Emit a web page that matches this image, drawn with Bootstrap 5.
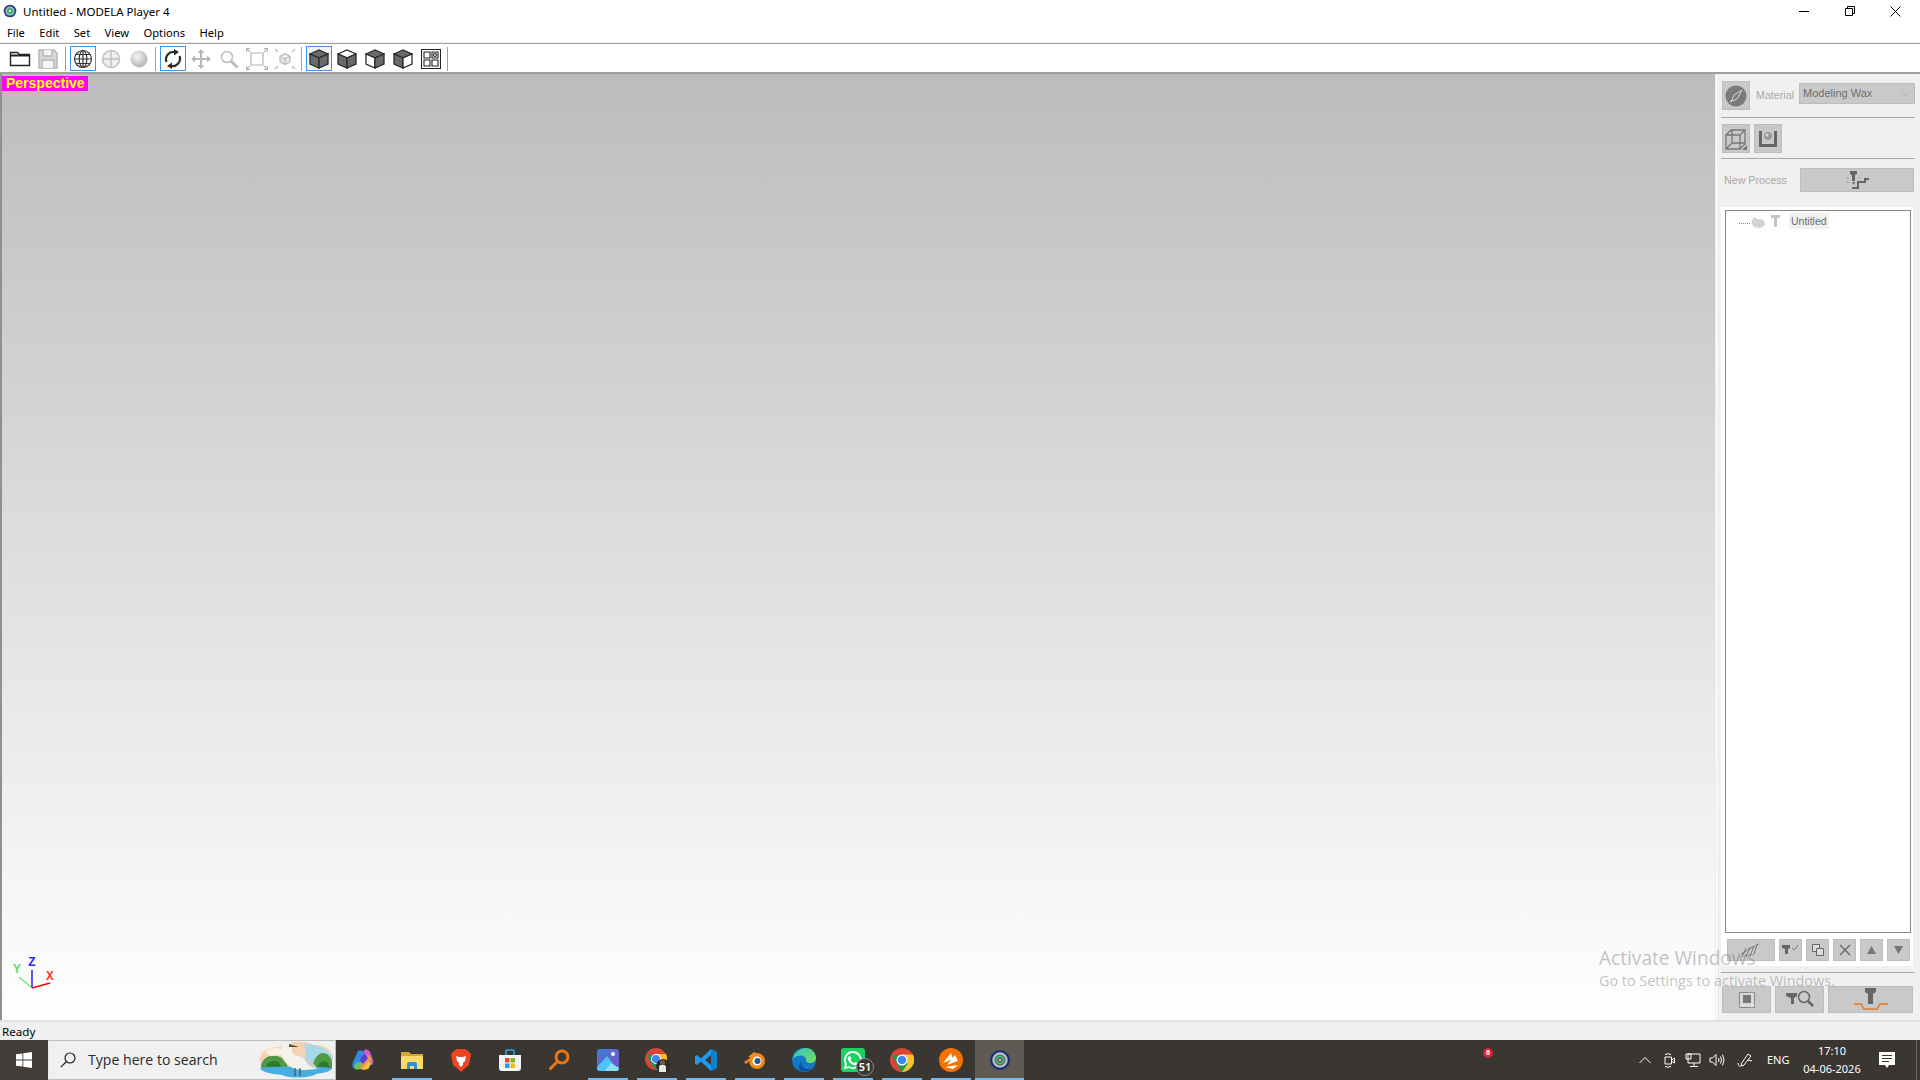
<!DOCTYPE html>
<html lang="en">
<head>
<meta charset="UTF-8">
<title>Untitled - MODELA Player 4</title>
<link rel="stylesheet" href="https://cdn.jsdelivr.net/npm/bootstrap@5.3.0/dist/css/bootstrap.min.css">
<style>
    html, body { height: 1080px; overflow: hidden; }
    body { font-family: "Noto Sans", "Open Sans", sans-serif; font-size: 12px; color: #000; background: #f0f0f0; }
    svg { display: block; flex: none; }

    .win-title { height: 22px; background: #fff; padding-left: 3px; }
    .win-title span { margin-left: 6px; font-size: 11.5px; line-height: 23px; }
    .win-ctl { width: 45.5px; height: 20px; }
    .win-menu { height: 20px; background: #fff; padding-left: 7px; gap: 14.4px; font-size: 11.2px; line-height: 21px; }
    .win-rule { height: 2px; background: #f0f0f0; border-bottom: 1px solid #a0a0a0; }

    .tool-bar { height: 30px; background: #fff; padding: 2px 0 0 6px; border-bottom: 2px solid #a0a0a0; }
    .tool-btn { width: 28px; height: 25px; }
    .tool-on { display: flex; justify-content: center; }
    .tool-on > div { width: 26px; height: 25px; border: 1px solid #3a96ea; display: flex; align-items: center; justify-content: center; }
    .tool-on.dither > div { background: repeating-conic-gradient(#e8e8e8 0 25%, #fff 0 50%) 0 0 / 2px 2px; }
    .tool-sep { width: 6px; height: 25px; position: relative; }
    .tool-sep::after { content: ""; position: absolute; left: 2px; top: 1px; bottom: 0; width: 1px; background: #a0a0a0; }

    .work-area { height: 946px; }
    .view-port { position: relative; width: 1716px; background: linear-gradient(#bcbcbc, #fff); border-left: 2px solid #909090; border-right: 1px solid #ececec; }
    .view-tag { position: absolute; left: 0; top: 2px; width: 86px; height: 15px; background: #ff00ff; color: #ffff00; font: bold 14px/15px "Liberation Sans", sans-serif; padding-left: 4px; }
    .view-axis { position: absolute; left: 0; bottom: 0; }

    .side-panel { width: 204px; padding: 7px 5px 0 5px; font: 11px "Liberation Sans", sans-serif; color: #a8a8a8; border-left: 1px solid #fff; }
    .gray-btn { background: #c9c9c9; border: 1px solid #bdbdbd; display: flex; align-items: center; justify-content: center; }
    .side-rule { height: 1px; background: #a8a8a8; margin-left: -1px; }
    .side-label { font-size: 10.7px; }
    .mat-select { width: 116px; height: 21px; margin-top: 2px; background: #c9c9c9; border: 1px solid #bdbdbd; color: #6d6d6d; padding: 0 3px; line-height: 18px; }
    .tree-frame { background: #fff; padding: 3px 2px 5px 3px; width: 192px; margin: 15px 0 0 -1px; }
    .tree-box { height: 723px; border: 1px solid #8a8a8a; margin-left: 1px; background: #fff; padding: 2px 0 0 10px; }
    .tree-label { background: #f0f0f0; color: #6d6d6d; padding: 0 2px; font-size: 10.5px; line-height: 16px; margin-left: 9px; }

    .status-line { height: 20px; border-top: 2px solid #e2e2e2; font-size: 11.6px; line-height: 20px; padding-left: 2px; background: #f0f0f0; }

    .task-bar { height: 40px; background: #3a3632; color: #fff; }
    .task-start { width: 48px; background: #403d3a; }
    .task-search { width: 288px; background: #f0f0f0; border: 1px solid #bcbcbc; border-left-color: #e8e8e8; color: #2a2a2a; padding-left: 11px; }
    .task-search span { margin-left: 12px; font-family: "Open Sans", sans-serif; font-size: 14.1px; }
    .task-item { width: 49px; height: 40px; position: relative; }
    .task-item.open::after { content: ""; position: absolute; left: 4.5px; right: 4.5px; bottom: 0; height: 2px; background: #76b9ed; }
    .task-item.cur { background: #5f5a54; }
    .task-item.cur::after { left: 0; right: 0; }
    .task-count { position: absolute; right: 3px; bottom: 4px; width: 18px; height: 18px; border-radius: 50%; background: #3a3632; border: 1px solid #8a8a8a; font-size: 11px; line-height: 16px; text-align: center; font-weight: 600; }
    .task-dot { width: 10px; height: 10px; border-radius: 50%; background: #d9232e; margin: 8px 0 0 459px; color: #fff; font-size: 7px; font-weight: 700; line-height: 10px; text-align: center; }
    .tray-text { font-size: 11px; line-height: 18px; text-align: center; white-space: nowrap; }

    .win-water { position: absolute; left: 1599px; top: 944px; color: rgba(110,110,110,.42); font-family: "Open Sans", sans-serif; pointer-events: none; white-space: nowrap; }
    .win-water div:first-child { font-size: 19.1px; line-height: 28px; }
    .win-water div:last-child { font-size: 14.4px; line-height: 18px; }
</style>
</head>
<body class="d-flex flex-column">

<!-- title bar -->
<div class="win-title d-flex align-items-center">
    <svg width="14" height="14" viewBox="0 0 14 14"><circle cx="7" cy="7" r="6.3" fill="#24417e"/><circle cx="7" cy="7" r="4.6" fill="#9fb7c8"/><circle cx="7" cy="7" r="3" fill="#3fae6c"/><circle cx="7" cy="7" r="1.2" fill="#d8f0dc"/></svg>
    <span>Untitled - MODELA Player 4</span>
    <div class="d-flex ms-auto" style="margin-right:2px">
        <div class="win-ctl d-flex align-items-center justify-content-center"><svg width="10" height="10" viewBox="0 0 10 10"><path d="M0 5.500h10" stroke="#000"/></svg></div>
        <div class="win-ctl d-flex align-items-center justify-content-center"><svg width="10" height="10" viewBox="0 0 10 10" fill="none" stroke="#000"><path d="M.5 2.500h7v7h-7zM2.500 2.500v-2h7v7h-2"/></svg></div>
        <div class="win-ctl d-flex align-items-center justify-content-center"><svg width="11" height="11" viewBox="0 0 11 11"><path d="M.5.500l10 10M10.500 .5l-10 10" stroke="#000"/></svg></div>
    </div>
</div>
<div class="win-menu d-flex"><span>File</span><span>Edit</span><span>Set</span><span>View</span><span>Options</span><span>Help</span></div>
<div class="win-rule"></div>

<!-- toolbar -->
<div class="tool-bar d-flex">
    <div class="tool-btn d-flex align-items-center justify-content-center"><svg width="22" height="18" viewBox="0 0 22 18" fill="none" stroke="#222" stroke-width="1.400"><path d="M1.500 15.500v-13h7l2 2h10v11z" fill="#fff"/><path d="M1.500 5.500h19" stroke-width="2"/></svg></div>
    <div class="tool-btn d-flex align-items-center justify-content-center"><svg width="20" height="20" viewBox="0 0 20 20" fill="#d8d8d8" stroke="#b5b5b5" stroke-width="1.400"><path d="M1 1h15l3 3v15H1z"/><path d="M5 1v6h9V1M4 19v-8h12v8" fill="#f4f4f4"/></svg></div>
    <div class="tool-sep" style="margin-left:1px"></div>
    <div class="tool-btn tool-on"><div><svg width="20" height="20" viewBox="0 0 20 20" fill="none" stroke="#333" stroke-width="1.200"><circle cx="10" cy="10" r="8.500"/><ellipse cx="10" cy="10" rx="3.800" ry="8.500"/><path d="M10 1.500v17M1.500 10h17M3 5.500h14M3 14.500h14"/></svg></div></div>
    <div class="tool-btn d-flex align-items-center justify-content-center"><svg width="20" height="20" viewBox="0 0 20 20" fill="#eee" stroke="#c2c2c2" stroke-width="1.500"><circle cx="10" cy="10" r="8.500"/><path d="M10 1.500v17M1.500 10h17" fill="none"/></svg></div>
    <div class="tool-btn d-flex align-items-center justify-content-center"><svg width="20" height="20" viewBox="0 0 20 20"><defs><radialGradient id="ballShade" cx=".4" cy=".35" r=".7"><stop offset="0" stop-color="#f5f5f5"/><stop offset="1" stop-color="#b0b0b0"/></radialGradient></defs><circle cx="10" cy="10" r="8.500" fill="url(#ballShade)"/></svg></div>
    <div class="tool-sep"></div>
    <div class="tool-btn tool-on"><div><svg width="20" height="20" viewBox="0 0 20 20" fill="none" stroke="#2a2a2a" stroke-width="2.200"><path d="M3.500 13A7.500 7.500 0 0 1 12 3"/><path d="M16.500 7A7.500 7.500 0 0 1 8 17"/><path d="M11 0l5 3-5 3.500zM9 20l-5-3 5-3.500z" fill="#2a2a2a" stroke="none"/></svg></div></div>
    <div class="tool-btn d-flex align-items-center justify-content-center"><svg width="20" height="20" viewBox="0 0 20 20" fill="#b8b8b8"><path d="M10 0l3.500 4h-2.500v5h5V6.500l4 3.500-4 3.500V11h-5v5h2.500L10 20l-3.500-4H9v-5H4v2.500L0 10l4-3.500V9h5V4H6.500z"/></svg></div>
    <div class="tool-btn d-flex align-items-center justify-content-center"><svg width="20" height="20" viewBox="0 0 20 20" fill="none" stroke="#bdbdbd"><circle cx="8" cy="8" r="5.500" stroke-width="1.500"/><path d="M12 12l6.500 6.500" stroke-width="3"/></svg></div>
    <div class="tool-btn d-flex align-items-center justify-content-center"><svg width="22" height="22" viewBox="0 0 22 22" fill="none" stroke="#b5b5b5" stroke-width="1.200"><path d="M5 5h12v12H5z"/><path d="M1 1l3 3M21 1l-3 3M1 21l3-3M21 21l-3-3"/><path d="M.5 4V.5H4M18 .5h3.500V4M.5 18v3.500H4M18 21.500h3.500V18"/></svg></div>
    <div class="tool-btn d-flex align-items-center justify-content-center"><svg width="22" height="22" viewBox="0 0 22 22" fill="none" stroke="#bcbcbc" stroke-width="1.200"><path d="M6 8l5-2.500L16 8v6l-5 2.500L6 14zM6 8l5 2.500L16 8M11 10.500v6" fill="#e4e4e4"/><path d="M1 1l3 3M21 1l-3 3M1 21l3-3M21 21l-3-3"/></svg></div>
    <div class="tool-sep"></div>
    <div class="tool-btn tool-on dither"><div><svg width="20" height="20" viewBox="0 0 20 20" stroke="#2a2a2a" stroke-width="1.300"><path d="M1 5l9-4 9 4-9 4z" fill="#6a6a6a"/><path d="M1 5v10l9 4V9z" fill="#6a6a6a"/><path d="M19 5v10l-9 4V9z" fill="#6a6a6a"/></svg></div></div>
    <div class="tool-btn d-flex align-items-center justify-content-center"><svg width="20" height="20" viewBox="0 0 20 20" stroke="#2a2a2a" stroke-width="1.300"><path d="M1 5l9-4 9 4-9 4z" fill="#fff"/><path d="M1 5v10l9 4V9z" fill="#6a6a6a"/><path d="M19 5v10l-9 4V9z" fill="#6a6a6a"/></svg></div>
    <div class="tool-btn d-flex align-items-center justify-content-center"><svg width="20" height="20" viewBox="0 0 20 20" stroke="#2a2a2a" stroke-width="1.300"><path d="M1 5l9-4 9 4-9 4z" fill="#6a6a6a"/><path d="M1 5v10l9 4V9z" fill="#fff"/><path d="M19 5v10l-9 4V9z" fill="#6a6a6a"/></svg></div>
    <div class="tool-btn d-flex align-items-center justify-content-center"><svg width="20" height="20" viewBox="0 0 20 20" stroke="#2a2a2a" stroke-width="1.300"><path d="M1 5l9-4 9 4-9 4z" fill="#6a6a6a"/><path d="M1 5v10l9 4V9z" fill="#6a6a6a"/><path d="M19 5v10l-9 4V9z" fill="#fff"/></svg></div>
    <div class="tool-btn d-flex align-items-center justify-content-center"><svg width="20" height="20" viewBox="0 0 20 20" fill="none" stroke="#222" stroke-width="1.100"><path d="M.5.500h19v19H.5z"/><path d="M3 3h6v6H3zM11 3h6v6h-6zM3 11h6v6H3zM11 11h6v6h-6z"/><circle cx="14" cy="6" r="1.500"/></svg></div>
    <div class="tool-sep"></div>
</div>

<!-- main area -->
<div class="work-area d-flex">
    <div class="view-port">
        <div class="view-tag">Perspective</div>
        <svg class="view-axis" width="70" height="70" viewBox="0 0 70 70" font-family="Liberation Mono, monospace" font-size="13" font-weight="bold">
            <path d="M30 20v18" stroke="#0000ff" stroke-width="1.300"/>
            <path d="M30 38l18-5" stroke="#ff0000" stroke-width="1.300"/>
            <path d="M30 38L17 27" stroke="#00ee00" stroke-width="1"/>
            <text x="26" y="16" fill="#2a2aff">Z</text>
            <text x="44" y="30" fill="#ff3a3a">X</text>
            <text x="11" y="23" fill="#66dd66">Y</text>
        </svg>
    </div>
    <div class="side-panel d-flex flex-column">
        <div class="d-flex align-items-start">
            <div class="gray-btn" style="width:28px;height:29px"><svg width="22" height="22" viewBox="0 0 22 22"><circle cx="11" cy="11" r="10.500" fill="#7a7a7a"/><path d="M17 5L9 10l-2 5-2 2 2-1 5-2z" fill="none" stroke="#d8d8d8"/></svg></div>
            <span class="side-label" style="margin:8px 0 0 6px">Material</span>
            <div class="mat-select d-flex justify-content-between ms-auto"><span>Modeling Wax</span><svg width="10" height="19" viewBox="0 0 10 19"><path d="M1 8l4 4 4-4" fill="none" stroke="#b0b0b0"/></svg></div>
        </div>
        <div class="side-rule" style="margin-top:7px"></div>
        <div class="d-flex gap-1" style="margin-top:6px">
            <div class="gray-btn" style="width:28px;height:29px"><svg width="22" height="22" viewBox="0 0 22 22" fill="none" stroke="#777" stroke-width="1.300"><path d="M1 7h14v14H1zM1 7l5-5h14v14l-5 5M15 7l5-5M1 21l6-6M7 2v13h13"/><path d="M22 22h-5l5-5z" fill="#777" stroke="none"/></svg></div>
            <div class="gray-btn" style="width:28px;height:29px"><svg width="20" height="20" viewBox="0 0 20 20"><path d="M1 2v16h18V2h-3v13H4V2z" fill="#666"/><circle cx="10" cy="7" r="4" fill="#999"/><circle cx="9" cy="6" r="1.500" fill="#ddd"/></svg></div>
        </div>
        <div class="side-rule" style="margin-top:5px"></div>
        <div class="d-flex align-items-center" style="margin-top:9px">
            <span class="side-label" style="margin-left:2px">New Process</span>
            <div class="gray-btn ms-auto" style="width:114px;height:24px;margin-right:1px"><svg width="24" height="20" viewBox="0 0 24 20" fill="#666"><path d="M5 1h7v3l-2 1v6H7V5L5 4zM7 12h3l-1 3z"/><path d="M7 18h6v-6h7V9h4" fill="none" stroke="#666" stroke-width="2"/><path d="M2 8h2M1 12h3M13 8h2" stroke="#999"/></svg></div>
        </div>
        <div class="tree-frame d-flex flex-column">
            <div class="tree-box">
                <div class="d-flex align-items-center">
                    <svg width="32" height="16" viewBox="0 0 32 16"><path d="M3 10.500h12" stroke="#888" stroke-dasharray="1 1"/><path d="M14 5l3 2h3c4 0 5 3 5 5s-3 4-6 4-6-1-7-4 1-5 2-7z" transform="translate(4 -1)" fill="#d4d4d4"/></svg>
                    <svg width="9" height="12" viewBox="0 0 9 12" style="margin-left:3px" fill="#c4c4c4"><path d="M0 0h9v3H6v9H3V3H0z"/></svg>
                    <span class="tree-label">Untitled</span>
                </div>
            </div>
            <div class="d-flex align-items-center" style="margin-top:6px;margin-left:3px;gap:4px">
                <div class="gray-btn" style="width:48px;height:22px"><svg width="22" height="16" viewBox="0 0 22 16" fill="none" stroke="#777"><path d="M2 15l4-9M6 15l4-10M10 14l4-10M14 12l3-9M1 12c4-1 5-4 7-4s3-3 5-3 3-3 6-3"/></svg></div>
                <div class="gray-btn" style="width:23px;height:22px"><svg width="17" height="14" viewBox="0 0 17 14"><path d="M0 2h8v3L6 6v5H3V6L0 5z" fill="#666"/><path d="M10 5l2 2 4-5" fill="none" stroke="#777"/></svg></div>
                <div class="gray-btn" style="width:23px;height:22px"><svg width="12" height="12" viewBox="0 0 12 12" fill="#ddd" stroke="#666"><path d="M.5.500h7v7h-7z"/><path d="M4.500 4.500h7v7h-7z"/></svg></div>
                <div class="gray-btn" style="width:23px;height:22px"><svg width="12" height="12" viewBox="0 0 12 12"><path d="M1 1l10 10M11 1L1 11" stroke="#666" stroke-width="1.400"/></svg></div>
                <div class="gray-btn" style="width:23px;height:22px"><svg width="9" height="8" viewBox="0 0 9 8"><path d="M4.500 0L9 8H0z" fill="#777"/></svg></div>
                <div class="gray-btn" style="width:23px;height:22px"><svg width="9" height="8" viewBox="0 0 9 8"><path d="M0 0h9L4.500 8z" fill="#777"/></svg></div>
            </div>
        </div>
        <div class="side-rule" style="margin-top:6px"></div>
        <div class="d-flex" style="margin-top:13px;gap:4px">
            <div class="gray-btn" style="width:49px;height:27px"><svg width="16" height="16" viewBox="0 0 16 16"><path d="M.5.500h15v15H.5z" fill="#d8d8d8" stroke="#888"/><path d="M4 3h8v8H4z" fill="#777"/><path d="M13 .5v15M.5 13h15" stroke="#eee" stroke-dasharray="1 1"/></svg></div>
            <div class="gray-btn" style="width:49px;height:27px"><svg width="30" height="20" viewBox="0 0 30 20" fill="#666"><path d="M1 3h11v3L9 8v6H6V8L1 6z"/><circle cx="19" cy="7" r="5.500" fill="none" stroke="#666" stroke-width="1.500"/><path d="M23 11l5 5" stroke="#666" stroke-width="2.500"/></svg></div>
            <div class="gray-btn" style="width:85px;height:27px"><svg width="36" height="24" viewBox="0 0 36 24"><path d="M12 0h11v4l-3 2v10h-5V6l-3-2z" fill="#666"/><path d="M1 16h7l3 5h13l3-5h8" fill="none" stroke="#e08a45" stroke-width="2"/></svg></div>
        </div>
    </div>
</div>

<div class="status-line">Ready</div>

<!-- taskbar -->
<div class="task-bar d-flex">
    <div class="task-start d-flex align-items-center justify-content-center"><svg width="16" height="16" viewBox="0 0 16 16" fill="#fff"><path d="M0 2.300l6.500-.9v6.200H0zM7.300 1.300L16 0v7.600H7.300zM0 8.400h6.500v6.200L0 13.700zM7.300 8.400H16V16l-8.700-1.300z"/></svg></div>
    <div class="task-search d-flex align-items-center">
        <svg width="16" height="16" viewBox="0 0 16 16" fill="none" stroke="#222" stroke-width="1.200"><circle cx="10" cy="6" r="5"/><path d="M6.500 9.500L.8 15.200"/></svg>
        <span>Type here to search</span>
        <svg class="ms-auto" width="76" height="38" viewBox="0 0 76 38" style="margin-right:1px">
            <path d="M2 20C0 10 12 6 22 6 30 0 48-1 56 4c8-1 18 4 19 12 0 6-2 12-6 14H8c-4-2-5-6-6-10z" fill="#f4d2b4"/>
            <path d="M46 3c8 0 24 3 29 13l-3 12H50z" fill="#a9d9e8"/>
            <ellipse cx="17" cy="11" rx="9" ry="4" fill="#fbeee2"/>
            <path d="M3 26c0-6 5-11 10-11s5-1 9 1 7 6 8 10v3H5zM54 28c1-8 5-16 11-16 5 0 9 5 9 10v6z" fill="#4f9a42"/>
            <path d="M8 24c3-4 9-5 13-3l3 7H10zM60 24c2-4 7-5 10-2l2 6H60z" fill="#2f7a32"/>
            <path d="M2 27c14-2 56-2 72 0-1 4-10 5-16 6-4 4-26 5-34 1-8-1-20-2-22-7z" fill="#47aee0"/>
            <path d="M26 3c3-3 8-1 8 3 0 4 0 6 3 8 9 3 15 6 22 14-9 1-20 2-26-2-7-4-10-11-10-16 0-3 1-6 3-7z" fill="#f4f2ec"/>
            <path d="M45 15c5 2 10 6 14 12-6 0-10-3-14-12z" fill="#c5ced2"/>
            <path d="M31 3l10 3-10 0z" fill="#55483e"/>
            <path d="M37 27v8M42 27v8" stroke="#4c4c4c" stroke-width="1.200"/>
        </svg>
    </div>
    <div style="width:2px"></div>
    <div class="task-item d-flex align-items-center justify-content-center"><svg width="22" height="22" viewBox="0 0 22 22"><path d="M6 2c3-2 6 0 6 3l-3 12c-1 3-4 4-6 3-3-1-3-4-2-7z" fill="#2f8be8"/><path d="M12 1c3-1 5 0 6 2l3 8c1 3-1 6-3 5l-7-2z" fill="#c85fd0"/><path d="M8 14l7-8c3 0 5 3 4 6l-3 6c-2 3-6 3-8 2z" fill="#f0934a"/><path d="M4 14c2-1 5-1 6 1l-2 5c-2 1-5 1-6-2z" fill="#6ac254"/><path d="M9 8l4-3 3 4-5 6-3-3z" fill="#5a3fd0"/><path d="M16 13l3 1-2 5c-2 2-5 2-7 1z" fill="#f2c53d"/></svg></div>
    <div class="task-item open d-flex align-items-center justify-content-center"><svg width="22" height="20" viewBox="0 0 22 20"><path d="M0 2h8l2 2h12v15H0z" fill="#d9a52e"/><path d="M0 6h22v13H0z" fill="#fadb6a"/><path d="M6 19v-5q0-2 2-2h6q2 0 2 2v5h-3v-3H9v3z" fill="#2f8fd8"/></svg></div>
    <div class="task-item d-flex align-items-center justify-content-center"><svg width="20" height="23" viewBox="0 0 20 23"><path d="M3 2l3-2h8l3 2 3 3-2 11-6 5-2 2-2-2-6-5L0 5z" fill="#f0441f"/><path d="M5 7l3 1h4l3-1-1 5-2 2v2l-2 2-2-2v-2l-2-2z" fill="#fff"/></svg></div>
    <div class="task-item d-flex align-items-center justify-content-center"><svg width="22" height="22" viewBox="0 0 22 22"><path d="M0 6h22v13q0 3-3 3H3q-3 0-3-3z" fill="#f4f4f4"/><path d="M7 6V2q0-1 1-1h6q1 0 1 1v4" fill="none" stroke="#2aa6df" stroke-width="1.600"/><path d="M6 9h4.500v4.500H6z" fill="#ea4b2c"/><path d="M11.500 9H16v4.500h-4.500z" fill="#7cb82f"/><path d="M6 14.500h4.500V19H6z" fill="#2a9fe0"/><path d="M11.500 14.500H16V19h-4.500z" fill="#f5b81f"/></svg></div>
    <div class="task-item d-flex align-items-center justify-content-center"><svg width="22" height="22" viewBox="0 0 22 22" fill="none" stroke="#f07410" stroke-width="3"><circle cx="14" cy="8" r="6"/><path d="M9.500 12.500L2.500 19.500" stroke-linecap="round"/></svg></div>
    <div class="task-item open d-flex align-items-center justify-content-center"><svg width="22" height="22" viewBox="0 0 22 22"><defs><linearGradient id="photoBg" x1="0" y1="0" x2="1" y2="1"><stop offset="0" stop-color="#3f7fdb"/><stop offset="1" stop-color="#7b4fc0"/></linearGradient></defs><rect width="22" height="22" rx="3" fill="url(#photoBg)"/><circle cx="16" cy="5" r="2" fill="#fff"/><path d="M0 18L10 7l7 9-5 6H3q-3 0-3-3z" fill="#4ec3f5"/><path d="M8 22l6-8 8 5q0 3-3 3z" fill="#8be0f5"/></svg></div>
    <div class="task-item open d-flex align-items-center justify-content-center"><svg width="26" height="26" viewBox="0 0 26 26"><g transform="translate(1 1)"><circle cx="11" cy="11" r="11" fill="#dc4437"/><path d="M1.500 6L6 15l5 7c6 0 11-5 11-11z" fill="#0f9d58"/><path d="M11 6h10c2 4 1 9-2 12-2 3-5 4-8 4l5-7z" fill="#fbc02d"/><circle cx="11" cy="11" r="5" fill="#fff"/><circle cx="11" cy="11" r="4" fill="#4285f4"/></g><circle cx="19" cy="19" r="7" fill="#2e2a27"/><path d="M15 25v-5q0-2 2-2h3q2 0 2 2v5z" fill="#e8e8e8"/><circle cx="18.500" cy="15.500" r="2.500" fill="#7a5a46"/></svg></div>
    <div class="task-item open d-flex align-items-center justify-content-center"><svg width="24" height="24" viewBox="0 0 24 24"><path d="M17 1l6 3v16l-6 3-10-9.500L3 17l-2-1V8l2-1 4 3.500z" fill="#1f9cf0"/><path d="M17 1l6 3v16l-6 3z" fill="#0f7fd0"/><path d="M17 7l-6 5 6 5z" fill="#3a3632"/></svg></div>
    <div class="task-item open d-flex align-items-center justify-content-center"><svg width="24" height="20" viewBox="0 0 24 20"><circle cx="14" cy="11" r="8" fill="#f08a1d"/><circle cx="14" cy="11" r="4.500" fill="#fff"/><circle cx="14.500" cy="11" r="3" fill="#265787"/><path d="M1 12l8-5-4 0 6-5 4 2-9 7-3 3z" fill="#f08a1d"/></svg></div>
    <div class="task-item open d-flex align-items-center justify-content-center"><svg width="24" height="24" viewBox="0 0 24 24"><defs><linearGradient id="edgeTop" x1="0" y1="0" x2="1" y2="1"><stop offset="0" stop-color="#2fc4c8"/><stop offset="1" stop-color="#7ddc5a"/></linearGradient></defs><circle cx="12" cy="12" r="12" fill="#1478c8"/><path d="M1 10C3 3 9 0 14 0c6 0 10 5 10 10 0 3-3 5-6 5s-4-2-4-3c0-4-5-7-13-2z" fill="url(#edgeTop)"/><path d="M9 14c0 5 5 9 11 6-3 3-7 4-10 3-4-1-5-5-1-9z" fill="#0b4f9e"/></svg></div>
    <div class="task-item open d-flex align-items-center justify-content-center"><svg width="24" height="24" viewBox="0 0 24 24"><rect width="24" height="24" rx="3" fill="#19d35f"/><path d="M12 4a8 8 0 0 0-7 12l-1 4 4-1a8 8 0 1 0 4-15z" fill="none" stroke="#fff" stroke-width="1.800"/><path d="M9 8l1.500 2.500-1 1.500c1 1.500 2 2.500 3.500 3l1.500-1 2.500 1.500c-.5 2-3 2.500-5 1.500s-4-3-5-5 0-3.500 2-4z" fill="#fff"/></svg><div class="task-count">51</div></div>
    <div class="task-item open d-flex align-items-center justify-content-center"><svg width="24" height="24" viewBox="0 0 24 24"><circle cx="12" cy="12" r="12" fill="#dc4437"/><path d="M1.600 6.500L7 16l5 8c7 0 12-5 12-12z" fill="#0f9d58"/><path d="M12 6.500h11c2 4 1.500 9-1.500 12.500-2.500 3-6 5-9.500 5l5.500-8z" fill="#fbc02d"/><circle cx="12" cy="12" r="5.500" fill="#fff"/><circle cx="12" cy="12" r="4.300" fill="#4285f4"/></svg></div>
    <div class="task-item open d-flex align-items-center justify-content-center"><svg width="24" height="24" viewBox="0 0 24 24"><circle cx="12" cy="12" r="12" fill="#f57200"/><path d="M4 15L12 5l2 6zM8 17L16 7l3 6zM6 19l13-2-5 4z" fill="#fff"/></svg></div>
    <div class="task-item open cur d-flex align-items-center justify-content-center"><svg width="20" height="20" viewBox="0 0 20 20" fill="none"><circle cx="10" cy="10" r="9" stroke="#1c2f7c" stroke-width="2"/><circle cx="10" cy="10" r="6.500" stroke="#b7c6cf" stroke-width="2"/><circle cx="10" cy="10" r="3.500" stroke="#47b27a" stroke-width="2"/><circle cx="10" cy="10" r="1" fill="#d8f0dc"/></svg></div>
    <div class="task-dot">6</div>
    <div class="d-flex align-items-center ms-auto">
        <svg width="12" height="8" viewBox="0 0 12 8" fill="none" stroke="#fff" style="margin-right:13px"><path d="M.5 7L6 1.500 11.500 7"/></svg>
        <svg width="11" height="15" viewBox="0 0 11 15" fill="none" stroke="#fff" style="margin-right:10px"><path d="M1 4h6.500v7H1zM7.500 7l3-2v5l-3-2M1 1.500q3-1.500 6 0M1 13.500q3 1.500 6 0"/></svg>
        <svg width="16" height="14" viewBox="0 0 16 14" fill="none" stroke="#fff" style="margin-right:8px"><path d="M3 1h12v9H3zM1 1h5v5H1zM9 10v3M5 13.500h8"/></svg>
        <svg width="16" height="14" viewBox="0 0 16 14" fill="none" stroke="#fff" style="margin-right:12px"><path d="M1 5h2.500L7 1.500v11L3.500 9H1zM9.500 5q1 2 0 4M11.500 3.500q2 3.500 0 7M13.500 1.500q3 5.500 0 11"/></svg>
        <svg width="16" height="16" viewBox="0 0 16 16" fill="none" stroke="#fff" style="margin-right:14px"><path d="M4 12l7-10 3 2-7 9-2 1zM1 11c0 4 3 4 4 2M11 8l4 1"/></svg>
        <span class="tray-text" style="width:22px;margin-right:8px">ENG</span>
        <div class="tray-text" style="width:70px;margin-right:12px"><div>17:10</div><div>04-06-2026</div></div>
        <svg width="16" height="16" viewBox="0 0 16 16" style="margin-right:21px"><path d="M0 0h16v13h-6l-2 3-2-3H0z" fill="#fff"/><path d="M3 3.500h10M3 6.500h10M3 9.500h7" stroke="#3a3632"/></svg>
        <div style="width:1px;height:40px;background:#6a6661;margin-right:3px"></div>
    </div>
</div>

<div class="win-water"><div>Activate Windows</div><div>Go to Settings to activate Windows.</div></div>

</body>
</html>
